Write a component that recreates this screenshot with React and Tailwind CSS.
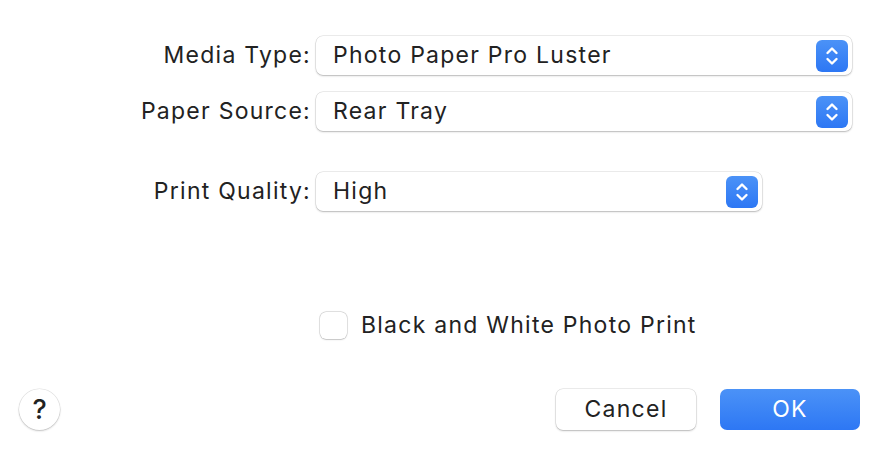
import React from 'react';

const Stepper = () => (
  <div className="w-[32px] h-[32px] rounded-[6px] bg-gradient-to-b from-[#4b92f7] to-[#2d77f4] flex items-center justify-center">
    <svg width="16" height="22" viewBox="0 0 16 22" fill="none" stroke="white" strokeWidth="2.4" strokeLinecap="round" strokeLinejoin="round">
      <path d="M3.5 8 L8 3.5 L12.5 8" />
      <path d="M3.5 14 L8 18.5 L12.5 14" />
    </svg>
  </div>
);

const Popup = ({ value, width }) => (
  <div className={`${width} h-[39px] bg-white rounded-[7px] shadow-[0_0_0_0.5px_rgba(0,0,0,0.14),0_1px_2px_rgba(0,0,0,0.22)] flex items-center justify-between pl-[17px] pr-[4px]`}>
    <span>{value}</span>
    <Stepper />
  </div>
);

const Row = ({ label, value, width, className }) => (
  <div className={`flex items-center ${className}`}>
    <div className="w-[311px] text-right">{label}</div>
    <div className="ml-[5px]">
      <Popup value={value} width={width} />
    </div>
  </div>
);

export default function App() {
  return (
    <div className="w-[876px] h-[456px] bg-white text-[#222222] text-[23px] tracking-[1.25px] leading-none font-['Inter',sans-serif] flex flex-col">
      <Row label="Media Type:" value="Photo Paper Pro Luster" width="w-[536px]" className="mt-[36px]" />
      <Row label="Paper Source:" value="Rear Tray" width="w-[536px]" className="mt-[17px]" />
      <Row label="Print Quality:" value="High" width="w-[446px]" className="mt-[41px]" />

      <div className="flex items-center ml-[320px] mt-[101px]">
        <div className="w-[27px] h-[27px] rounded-[6px] bg-white shadow-[0_0_0_0.5px_rgba(0,0,0,0.2),0_0.5px_1.5px_rgba(0,0,0,0.15)]" />
        <span className="ml-[14px]">Black and White Photo Print</span>
      </div>

      <div className="flex items-center mt-[50px] pl-[19px] pr-[16px]">
        <div className="w-[41px] h-[41px] rounded-full bg-white shadow-[0_0_0_0.5px_rgba(0,0,0,0.12),0_1px_2px_rgba(0,0,0,0.2)] flex items-center justify-center text-[27px] font-medium tracking-normal">?</div>
        <div className="flex-1" />
        <button className="w-[140px] h-[41px] rounded-[7px] bg-white shadow-[0_0_0_0.5px_rgba(0,0,0,0.14),0_1px_2px_rgba(0,0,0,0.22)] text-[#222222]">Cancel</button>
        <button className="ml-[24px] w-[140px] h-[41px] rounded-[7px] bg-gradient-to-b from-[#4b92f7] to-[#2d77f4] text-white">OK</button>
      </div>
    </div>
  );
}
